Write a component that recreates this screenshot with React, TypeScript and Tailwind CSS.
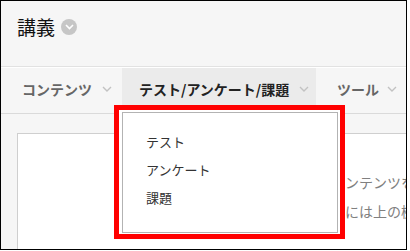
import React from "react";

const Chevron = ({ color = "#c2c2c2" }: { color?: string }) => (
  <svg width="10" height="6" viewBox="0 0 10 6" className="shrink-0">
    <path d="M1 1l4 4 4-4" fill="none" stroke={color} strokeWidth="1.4" />
  </svg>
);

export default function App() {
  const font = { fontFamily: '"Noto Sans CJK JP", "Noto Sans", sans-serif' };
  return (
    <div className="w-[410px] h-[251px] bg-white" style={font}>
      <div className="relative w-[407px] h-[250px] border border-black bg-[#f6f6f6] overflow-hidden flex flex-col">
        {/* header */}
        <div className="h-[66px] shrink-0 border-b border-[#e2e2e2] flex items-start pl-[16px] pt-[14px] gap-[6px]">
          <span className="text-[19px] leading-[24px] text-[#111]">講義</span>
          <span className="mt-[4px] w-[16px] h-[16px] rounded-full bg-[#c6c6c6] flex items-center justify-center">
            <svg width="9" height="6" viewBox="0 0 9 6">
              <path d="M1 1l3.5 3.5L8 1" fill="none" stroke="#fff" strokeWidth="1.6" />
            </svg>
          </span>
        </div>
        {/* tabs */}
        <div className="h-[47px] shrink-0 border-t border-white border-b border-b-[#dadada] flex text-[14px] font-bold">
          <div className="w-[121px] flex items-center pl-[21px] pb-[3px] gap-[10px] text-[#666]">
            <span>コンテンツ</span>
            <Chevron />
          </div>
          <div className="w-[194px] bg-[#ebebeb] flex items-center pl-[17px] pb-[3px] gap-[10px] text-[#222]">
            <span>テスト/アンケート/課題</span>
            <Chevron />
          </div>
          <div className="flex items-center pl-[21px] pb-[3px] gap-[8px] text-[#666]">
            <span>ツール</span>
            <Chevron />
          </div>
        </div>
        {/* content */}
        <div className="flex-1 pl-[16px] pt-[19px] flex">
          <div className="flex-1 bg-white border-l border-t border-[#cfcfcf] pt-[34px] text-[14px] leading-[29px] text-[#808080] whitespace-nowrap">
            <div className="pl-[229px]">ここにはまだコンテンツを追加</div>
            <div className="pl-[243px]">追加する場合には上の機能を</div>
          </div>
        </div>

        {/* dropdown menu with red annotation */}
        <div className="absolute left-[113px] top-[104px] w-[231px] h-[134px] border-[5px] border-[#ff0000] bg-white">
          <div className="ml-[3px] mt-[2px] w-[216px] h-[121px] border border-[#b3b3b3] pt-[15px] pl-[23px] text-[13px] leading-[28px] text-[#333]">
            <div>テスト</div>
            <div>アンケート</div>
            <div>課題</div>
          </div>
        </div>
      </div>
    </div>
  );
}
